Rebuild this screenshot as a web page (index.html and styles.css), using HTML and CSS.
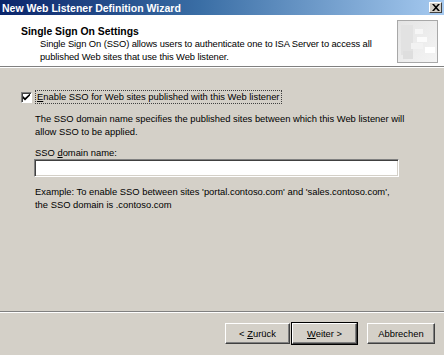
FILE: index.html
```html
<!DOCTYPE html>
<html>
<head>
<meta charset="utf-8">
<link rel="stylesheet" href="styles.css">
</head>
<body>
<div class="window">
  <div class="titlebar">
    <span class="title">New Web Listener Definition Wizard</span>
    <span class="close"><svg width="8" height="7" viewBox="0 0 8 7"><path d="M0 0h2l2 2.2L6 0h2L5 3.5 8 7H6L4 4.8 2 7H0l3-3.5z" fill="#000"/></svg></span>
  </div>
  <div class="header">
    <div class="header-text">
      <div class="h-title">Single Sign On Settings</div>
      <div class="h-desc">Single Sign On (SSO) allows users to authenticate one to ISA Server to access all published Web sites that use this Web listener.</div>
    </div>
    <div class="h-icon">
      <svg width="39" height="41" viewBox="0 0 39 41">
        <defs>
          <linearGradient id="g" x1="0" y1="0" x2="1" y2="1">
            <stop offset="0" stop-color="#e4e4e4"/>
            <stop offset="1" stop-color="#f4f4f4"/>
          </linearGradient>
        </defs>
        <rect x="0" y="0" width="39" height="41" fill="url(#g)"/>
        <rect x="3" y="4" width="12" height="30" fill="#e2e2e2"/>
        <rect x="17" y="8" width="8" height="5" fill="#f6f6f6"/>
        <rect x="19" y="16" width="10" height="5" fill="#fbfbfb"/>
        <rect x="13" y="22" width="12" height="6" fill="#f2f2f2"/>
        <rect x="27" y="26" width="10" height="6" fill="#ffffff"/>
        <rect x="5" y="30" width="10" height="8" fill="#dedede"/>
      </svg>
    </div>
  </div>
  <div class="content">
    <label class="check-row">
      <span class="checkbox"><svg width="7" height="7" viewBox="0 0 7 7"><path d="M0 2v2.5l2 2 5-5V-0.5L2 4z" fill="#000"/></svg></span>
      <span class="focus"><u>E</u>nable SSO for Web sites published with this Web listener</span>
    </label>
    <div class="indent">
      <p class="para">The SSO domain name specifies the published sites between which this Web listener will allow SSO to be applied.</p>
      <div class="field-label">SSO <u>d</u>omain name:</div>
      <div class="input"></div>
      <p class="para example">Example: To enable SSO between sites 'portal.contoso.com' and 'sales.contoso.com', the SSO domain is .contoso.com</p>
    </div>
  </div>
  <div class="separator"></div>
  <div class="buttons">
    <button class="btn">&lt; <u>Z</u>urück</button>
    <button class="btn default"><u>W</u>eiter &gt;</button>
    <button class="btn cancel">Abbrechen</button>
  </div>
</div>
</body>
</html>
```

FILE: styles.css
```css
html, body {
  margin: 0;
  padding: 0;
}
body {
  width: 444px;
  height: 355px;
  overflow: hidden;
  background: #d4d0c8;
  font-family: "Liberation Sans", Arial, sans-serif;
  font-size: 9.4px;
  color: #000;
}
.window {
  display: flex;
  flex-direction: column;
  height: 355px;
}
.titlebar {
  height: 15px;
  display: flex;
  align-items: center;
  justify-content: space-between;
  background: linear-gradient(to right, #0a246a 0%, #3a6ea5 45%, #a6caf0 100%);
  padding: 0 2px 0 2px;
}
.title {
  color: #fff;
  font-weight: bold;
  font-size: 10.5px;
}
.close {
  width: 13px;
  height: 11px;
  box-sizing: border-box;
  background: #d4d0c8;
  border: 1px solid;
  border-color: #fff #404040 #404040 #fff;
  display: flex;
  align-items: center;
  justify-content: center;
}
.header {
  height: 51px;
  background: #fff;
  display: flex;
  border-bottom: 1px solid #808080;
  box-shadow: 0 1px 0 #fff;
}
.header-text {
  flex: 1;
  min-width: 0;
  padding: 11px 0 0 21px;
}
.h-title {
  font-weight: bold;
  font-size: 10.4px;
  line-height: 11px;
}
.h-desc {
  padding-left: 19px;
  line-height: 13px;
  letter-spacing: -0.1px;
}
.h-icon {
  flex: none;
  margin: 5px 6px 0 0;
  width: 39px;
  height: 41px;
  border: 1px solid #a8a8a8;
}
.h-icon svg {
  display: block;
}
.content {
  flex: 1;
  padding: 23px 0 0 21px;
}
.check-row {
  display: flex;
  align-items: center;
  gap: 3px;
}
.checkbox {
  width: 11px;
  height: 11px;
  box-sizing: border-box;
  background: #fff;
  border: 1px solid;
  border-color: #808080 #fff #fff #808080;
  box-shadow: inset 1px 1px 0 #404040;
  display: flex;
  align-items: center;
  justify-content: center;
}
.focus {
  border: 1px dotted #404040;
  padding: 0 1px;
  line-height: 12px;
}
.indent {
  padding-left: 14px;
}
.para {
  margin: 0;
  line-height: 13px;
  width: 390px;
}
.para.example {
  width: 362px;
}
.indent .para:first-child {
  margin-top: 8px;
}
.field-label {
  margin-top: 8px;
  line-height: 13px;
}
.input {
  width: 365px;
  height: 18px;
  box-sizing: border-box;
  margin: 0 0 8px -1px;
  background: #fff;
  border: 1px solid;
  border-color: #808080 #fff #fff #808080;
  box-shadow: inset 1px 1px 0 #404040, inset -1px -1px 0 #d4d0c8;
}
.separator {
  height: 1px;
  background: #808080;
  border-bottom: 1px solid #fff;
  margin: 0 0 10px 0;
}
.buttons {
  display: flex;
  justify-content: flex-end;
  padding: 0 9px 11px 0;
}
.btn {
  width: 65px;
  height: 21px;
  font-family: "Liberation Sans", Arial, sans-serif;
  font-size: 9.4px;
  background: #d4d0c8;
  border: 1px solid;
  border-color: #fff #404040 #404040 #fff;
  box-shadow: inset -1px -1px 0 #808080;
  padding: 0;
  color: #000;
}
.btn.default {
  outline: 1px solid #000;
  margin-left: 2px;
}
.btn.cancel {
  margin-left: 10px;
  width: 68px;
}
```
